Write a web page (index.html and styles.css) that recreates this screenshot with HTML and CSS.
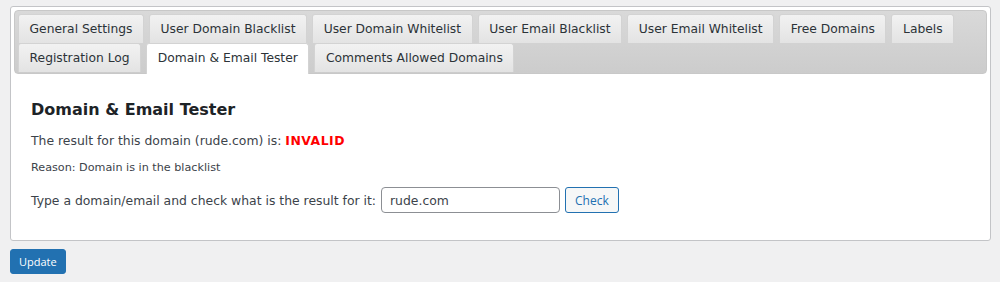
FILE: index.html
```html
<!DOCTYPE html>
<html lang="en">

<head>
    <meta charset="UTF-8">
    <title>Domain &amp; Email Tester</title>
    <link rel="stylesheet" href="styles.css">
</head>

<body>
    <div class="settings-box">
        <!-- Tabs -->
        <ul class="tab-nav">
            <li class="tab">General Settings</li>
            <li class="tab">User Domain Blacklist</li>
            <li class="tab">User Domain Whitelist</li>
            <li class="tab">User Email Blacklist</li>
            <li class="tab">User Email Whitelist</li>
            <li class="tab">Free Domains</li>
            <li class="tab">Labels</li>
            <li class="tab">Registration Log</li>
            <li class="tab active">Domain &amp; Email Tester</li>
            <li class="tab">Comments Allowed Domains</li>
        </ul>

        <div class="tab-panel">
            <h3>Domain &amp; Email Tester</h3>
            <p class="result">The result for this domain (rude.com) is: <span class="invalid">INVALID</span></p>
            <p class="reason">Reason: Domain is in the blacklist</p>
            <div class="test-row">
                <label for="test-domain">Type a domain/email and check what is the result for it:</label>
                <input type="text" id="test-domain" value="rude.com">
                <button class="check-button">Check</button>
            </div>
        </div>
    </div>

    <button class="update-button">Update</button>
</body>

</html>
```

FILE: styles.css
```css
body {
    font-family: "DejaVu Sans", Verdana, sans-serif;
    margin: 0;
    padding: 6px 9px 0 10px;
    background-color: #f0f0f1;
    color: #3c434a;
}

.settings-box {
    background-color: #fff;
    border: 1px solid #c3c4c7;
    border-radius: 3px;
    padding: 3px;
    height: 227px;
}

.tab-nav {
    list-style: none;
    margin: 0;
    padding: 3px 4px 0 3px;
    display: flex;
    flex-wrap: wrap;
    column-gap: 5px;
    background: linear-gradient(#d9d9d9, #cccccc);
    border: 1px solid #c8c8c8;
    border-radius: 4px;
    height: 59px;
    align-content: flex-start;
}

.tab {
    height: 29px;
    line-height: 29px;
    padding: 0 10.6px;
    font-size: 12.3px;
    color: #2c3338;
    background: linear-gradient(#f2f2f2, #e3e3e3);
    border: 1px solid #d3d3d3;
    border-bottom: none;
    border-radius: 3px 3px 0 0;
    box-sizing: border-box;
    white-space: nowrap;
}

.tab.active {
    background: #fff;
    color: #2c3338;
    height: 31px;
}

.tab-panel {
    padding: 14px 17px 0 17px;
}

.tab-panel h3 {
    font-size: 16px;
    font-weight: bold;
    color: #1d2327;
    margin: 12px 0 14px 0;
}

.result {
    font-size: 12.4px;
    margin: 0 0 13px 0;
}

.invalid {
    color: #ff0000;
    font-weight: bold;
    letter-spacing: 0.5px;
}

.reason {
    font-size: 11.2px;
    margin: 0 0 13px 0;
}

.test-row {
    display: flex;
    align-items: center;
    gap: 5px;
    font-size: 12.4px;
}

.test-row input {
    width: 179px;
    height: 26px;
    box-sizing: border-box;
    border: 1px solid #8c8f94;
    border-radius: 4px;
    padding: 0 8px;
    font-family: "DejaVu Sans", Verdana, sans-serif;
    font-size: 12.4px;
    color: #3c434a;
}

.check-button {
    height: 26px;
    padding: 0 9px;
    border: 1px solid #2271b1;
    border-radius: 3px;
    background-color: #f6f7f7;
    color: #2271b1;
    font-family: "Open Sans", sans-serif;
    font-size: 12px;
    cursor: pointer;
}

.update-button {
    margin-top: 8px;
    height: 25px;
    padding: 0 8px;
    border: 1px solid #2271b1;
    border-radius: 3px;
    background-color: #2271b1;
    color: #fff;
    font-family: "Open Sans", sans-serif;
    font-size: 11px;
    cursor: pointer;
}
```
